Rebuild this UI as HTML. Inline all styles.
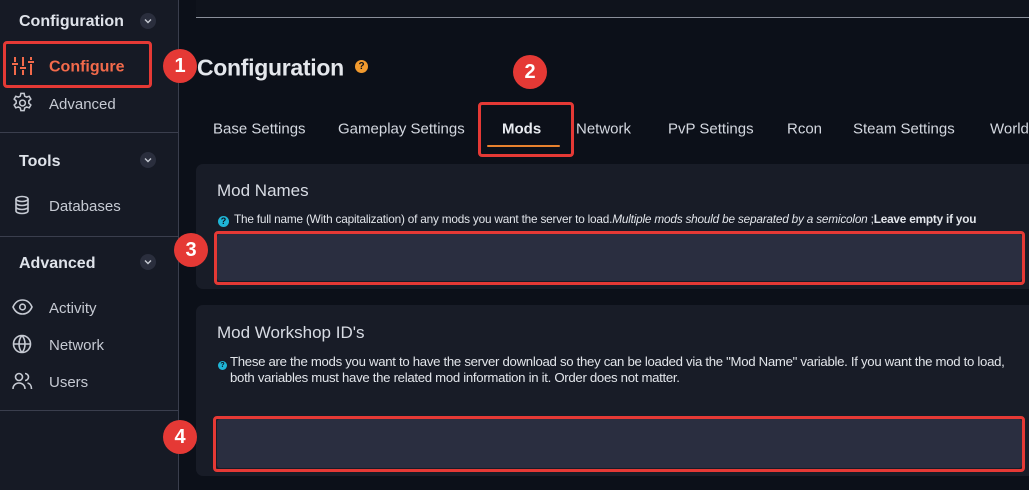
<!DOCTYPE html>
<html><head><meta charset="utf-8"><style>
*{margin:0;padding:0;box-sizing:border-box}
body{width:1029px;height:490px;overflow:hidden;background:#0c1019;font-family:"Liberation Sans",sans-serif;position:relative}
.a{position:absolute}
.side{left:0;top:0;width:179px;height:490px;background:#161a25;border-right:1px solid #3a3e4d}
.hd{left:19px;font-size:16px;font-weight:bold;color:#dfe3ea;transform:translateY(-45%)}
.chev{left:140px;width:16px;height:16px;border-radius:50%;background:#2a2e3d;transform:translateY(-50%)}
.chev svg{position:absolute;left:4px;top:5px}
.it{left:49px;font-size:15px;color:#c6cad3;transform:translateY(-42%)}
.ic{left:12px;transform:translateY(-50%)}
.div{left:0;width:179px;height:1px;background:#3a3e4d}
.badge{width:34px;height:34px;border-radius:50%;background:#e53935;color:#fff;font-weight:bold;font-size:20px;text-align:center;line-height:34px;transform:translate(-50%,-50%)}
.red{border:3px solid #e53935;border-radius:4px}
.tab{top:128px;font-size:15px;color:#d4d8e0;transform:translateY(-45%);white-space:nowrap}
.card{left:196px;width:840px;background:#181c27;border-radius:7px}
.ct{left:217px;font-size:17px;color:#d8dce4;transform:translateY(-45%)}
.desc{left:218px;font-size:11.8px;color:#e2e5ea;white-space:nowrap;letter-spacing:-0.2px}
.q{display:inline-block;width:11px;height:11px;border-radius:50%;background:#1fb5d6;color:#0c1019;font-size:9px;font-weight:bold;text-align:center;line-height:11px;margin-right:5px;vertical-align:-1px;letter-spacing:0}
.inp{left:217px;width:805px;background:#2a2e40;border-radius:3px}
</style></head><body>
<div class="a side"></div>
<div class="a hd" style="top:21px">Configuration</div>
<div class="a chev" style="top:21px"><svg width="8" height="6" viewBox="0 0 8 6"><path d="M1 1.5L4 4.5L7 1.5" stroke="#c6cad3" stroke-width="1.4" fill="none"/></svg></div>
<div class="a red" style="left:3px;top:41px;width:149px;height:47px"></div>
<svg class="a ic" style="top:66px;left:12px" width="22" height="20" viewBox="0 0 22 20"><g stroke="#f26a4b" stroke-width="2" fill="none"><path d="M3 1v5M3 10v9M0 8h6M11 1v9M11 14v5M8 12h6M19 1v3M19 8v11M16 6h6"/></g></svg>
<div class="a it" style="top:66px;color:#f26a4b;font-size:16px;font-weight:bold">Configure</div>
<svg class="a ic" style="top:103px;left:11px" width="23" height="23" viewBox="0 0 24 24"><g stroke="#c6cad3" stroke-width="1.6" fill="none"><circle cx="12" cy="12" r="3"/><path d="M10.3 2h3.4l.6 2.8 2 1.1 2.7-.9 1.7 2.9-2.1 1.9v2.4l2.1 1.9-1.7 2.9-2.7-.9-2 1.1-.6 2.8h-3.4l-.6-2.8-2-1.1-2.7.9-1.7-2.9 2.1-1.9V9.8L3.3 7.9 5 5l2.7.9 2-1.1z"/></g></svg>
<div class="a it" style="top:103px">Advanced</div>
<div class="a div" style="top:132px"></div>
<div class="a hd" style="top:161px">Tools</div>
<div class="a chev" style="top:160px"><svg width="8" height="6" viewBox="0 0 8 6"><path d="M1 1.5L4 4.5L7 1.5" stroke="#c6cad3" stroke-width="1.4" fill="none"/></svg></div>
<svg class="a ic" style="top:205px" width="20" height="20" viewBox="0 0 20 20"><g stroke="#c6cad3" stroke-width="1.6" fill="none"><ellipse cx="10" cy="4" rx="6" ry="2.5"/><path d="M4 4v12c0 1.4 2.7 2.5 6 2.5s6-1.1 6-2.5V4M4 8c0 1.4 2.7 2.5 6 2.5s6-1.1 6-2.5M4 12c0 1.4 2.7 2.5 6 2.5s6-1.1 6-2.5"/></g></svg>
<div class="a it" style="top:205px">Databases</div>
<div class="a div" style="top:236px"></div>
<div class="a hd" style="top:263px">Advanced</div>
<div class="a chev" style="top:262px"><svg width="8" height="6" viewBox="0 0 8 6"><path d="M1 1.5L4 4.5L7 1.5" stroke="#c6cad3" stroke-width="1.4" fill="none"/></svg></div>
<svg class="a ic" style="top:307px" width="21" height="16" viewBox="0 0 21 16"><g stroke="#c6cad3" stroke-width="1.6" fill="none"><path d="M1 8C3 3.5 6.5 1 10.5 1S18 3.5 20 8c-2 4.5-5.5 7-9.5 7S3 12.5 1 8z"/><circle cx="10.5" cy="8" r="2.8"/></g></svg>
<div class="a it" style="top:307px">Activity</div>
<svg class="a ic" style="top:344px" width="20" height="20" viewBox="0 0 20 20"><g stroke="#c6cad3" stroke-width="1.6" fill="none"><circle cx="10" cy="10" r="8.5"/><path d="M1.5 10h17M10 1.5c-4 4.5-4 12.5 0 17M10 1.5c4 4.5 4 12.5 0 17"/></g></svg>
<div class="a it" style="top:344px">Network</div>
<svg class="a ic" style="top:381px" width="21" height="18" viewBox="0 0 21 18"><g stroke="#c6cad3" stroke-width="1.6" fill="none"><circle cx="7" cy="5" r="3.5"/><path d="M1 17c0-3.5 2.5-6 6-6s6 2.5 6 6M13 1.5a3.5 3.5 0 0 1 0 7M15.5 11c2.5.5 4 3 4 6"/></g></svg>
<div class="a it" style="top:381px">Users</div>
<div class="a div" style="top:410px"></div>

<div class="a" style="left:196px;top:0;width:833px;height:17px;background:#0f131c"></div>
<div class="a" style="left:196px;top:17px;width:833px;height:1px;background:#8a8f9a"></div>
<div class="a" style="left:197px;top:68px;font-size:23px;color:#e4e7ec;transform:translateY(-50%);font-weight:bold;letter-spacing:-0.3px">Configuration</div>
<div class="a" style="left:355px;top:60px;width:13px;height:13px;border-radius:50%;background:#f29a2e;color:#0c1019;font-size:10px;font-weight:bold;text-align:center;line-height:13px">?</div>

<div class="a tab" style="left:213px">Base Settings</div>
<div class="a tab" style="left:338px">Gameplay Settings</div>
<div class="a tab" style="left:502px;font-weight:bold;color:#e8ebf0">Mods</div>
<div class="a" style="left:487px;top:145px;width:73px;height:2px;background:#e8822e;border-radius:1px"></div>
<div class="a red" style="left:478px;top:102px;width:96px;height:55px"></div>
<div class="a tab" style="left:576px">Network</div>
<div class="a tab" style="left:668px">PvP Settings</div>
<div class="a tab" style="left:787px">Rcon</div>
<div class="a tab" style="left:853px">Steam Settings</div>
<div class="a tab" style="left:990px">World</div>

<div class="a card" style="top:164px;height:125px"></div>
<div class="a ct" style="top:190px">Mod Names</div>
<div class="a desc" style="top:212px"><span class="q">?</span>The full name (With capitalization) of any mods you want the server to load.<i>Multiple mods should be separated by a semicolon</i> ;<b>Leave empty if you</b></div>
<div class="a inp" style="top:234px;height:47px"></div>
<div class="a red" style="left:214px;top:231px;width:811px;height:54px"></div>

<div class="a card" style="top:305px;height:171px"></div>
<div class="a ct" style="top:332px">Mod Workshop ID's</div>
<div class="a desc" style="top:354px;line-height:16px;font-size:13.2px;letter-spacing:-0.3px"><span class="q" style="width:9px;height:9px;line-height:9px;font-size:7px;margin-right:3px">?</span>These are the mods you want to have the server download so they can be loaded via the "Mod Name" variable. If you want the mod to load,<br><span style="padding-left:12px">both variables must have the related mod information in it. Order does not matter.</span></div>
<div class="a inp" style="top:419px;height:49px"></div>
<div class="a red" style="left:213px;top:416px;width:812px;height:56px"></div>

<div class="a badge" style="left:180px;top:66px">1</div>
<div class="a badge" style="left:530px;top:72px">2</div>
<div class="a badge" style="left:191px;top:250px">3</div>
<div class="a badge" style="left:180px;top:437px">4</div>
</body></html>
